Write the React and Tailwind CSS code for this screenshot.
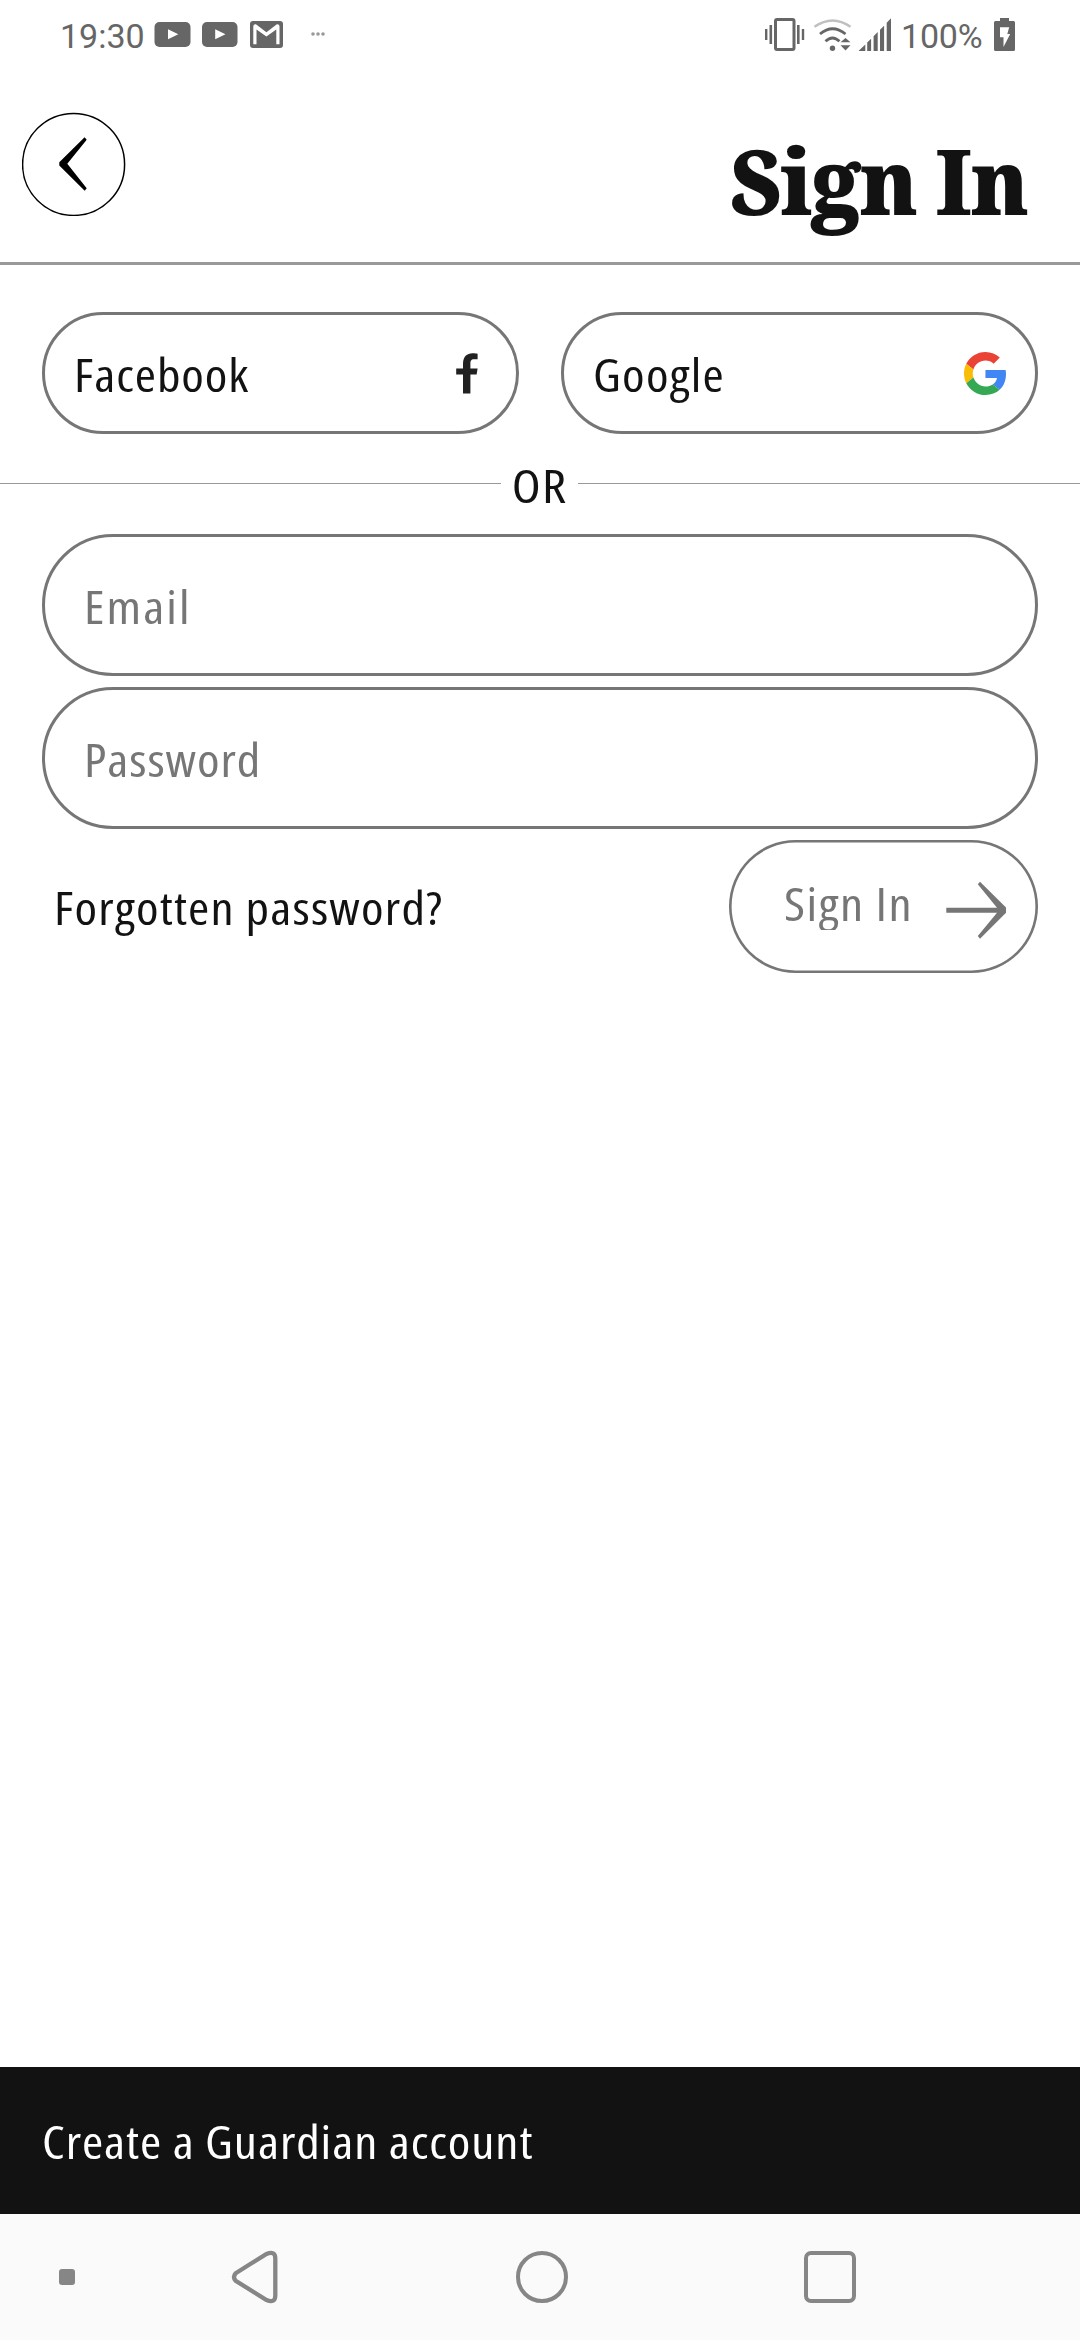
import React from "react";

function StatusBar() {
  return (
    <div className="flex h-[68px] w-full items-start justify-between pt-[14px]">
      <div className="flex h-[40px] items-center pl-[60px]">
        <span className="w-[94px] pt-[4px] font-[Roboto,sans-serif] text-[34px] leading-[40px] text-[#666]">19:30</span>
        <svg className="h-[40px] w-[180px]" viewBox="154 14 180 40" fill="#666">
          <rect x="154.5" y="22" width="36" height="25" rx="5" />
          <rect x="202" y="22" width="35.5" height="25" rx="5" />
          <path d="M168 29.3v10l10.3-5zM215.2 29.3v10l10.3-5z" fill="#fff" />
          <rect x="250" y="21" width="33" height="27" rx="3" />
          <path d="M253.3 44.3V26.2q0-2.2 2.6-2l10.5 8 10.5-8q2.6-.2 2.6 2v18.1h-3.2V29.6l-9.9 6.9-9.9-6.9v14.7z" fill="#fff" />
          <g fill="#999">
            <circle cx="313" cy="34" r="1.8" />
            <circle cx="318" cy="34" r="1.8" />
            <circle cx="323" cy="34" r="1.8" />
          </g>
        </svg>
      </div>
      <div className="flex h-[40px] items-center pr-[60px]">
        <svg className="h-[40px] w-[140px]" viewBox="760 14 140 40" fill="#666">
          <rect x="775.5" y="19.5" width="18.5" height="30" rx="1.5" fill="none" stroke="#666" strokeWidth="3" />
          <path d="M765 29h2.4v11H765zM769.5 25h2.6v19h-2.6zM797 25h2.6v19H797zM801.8 29h2.4v11h-2.4z" />
          <path d="M814.5 26.8q18-12.6 36 0" fill="none" stroke="#c0c0c0" strokeWidth="2.6" />
          <path d="M820 34q12.5-10.5 25.5 0M825.5 41.3q7-6.8 14 0" fill="none" stroke="#666" strokeWidth="2.8" />
          <circle cx="832.5" cy="48.2" r="2.7" />
          <path d="M840.5 42.3l5-4.3 5 4.3zM840.5 45.3h10l-5 5.2z" />
          <path d="M858.5 51l6.8-6.6V51zM867.2 51v-8.4l3.9-3.9V51zM873.6 51V36.2l4.1-4.1V51zM880 51V29.8l4.1-4.1V51zM886.7 51V22.8l4.3-4.6V51z" />
        </svg>
        <span className="w-[86px] pt-[4px] pl-px font-[Roboto,sans-serif] text-[34px] leading-[40px] tracking-[-0.2px] text-[#666]">100%</span>
        <svg className="h-[40px] w-[34px]" viewBox="986 14 34 40">
          <path d="M1000 18h9v3h4.5q1.5 0 1.5 1.5v27q0 1.5-1.5 1.5h-18q-1.5 0-1.5-1.5v-27q0-1.5 1.5-1.5h4.5z" fill="#666" />
          <path d="M1000 27.3h9.2L1007.3 34h2.9l-6.7 13V37.2h-3.5z" fill="#fff" />
        </svg>
      </div>
    </div>
  );
}

function Header() {
  return (
    <header className="flex h-[197px] items-start justify-between border-b-[3px] border-[#999] pr-[52px] pl-[22px]">
      <button className="mt-[44px] size-[104px] rounded-full" aria-label="Back">
        <svg className="size-[104px]" viewBox="22 112 104 104">
          <circle cx="73.6" cy="164.4" r="51" fill="none" stroke="#000" strokeWidth="1.5" />
          <path d="M59.3 162.3L84.6 137.2l2.1 2.6-19.4 24 19.4 24.4-2 2.6-25.4-25.2z" />
        </svg>
      </button>
      <h1 className="origin-right scale-x-94 pt-[50px] font-['Noto_Serif',serif] text-[91px] leading-[124px] font-black tracking-[-1.2px] text-[#121212] [word-spacing:-3px]">Sign In</h1>
    </header>
  );
}

function FacebookIcon() {
  return (
    <svg className="mr-[9px] h-[41px] w-[22px]" viewBox="455 355.5 22 41" fill="#212121">
      <path d="M462 396v-19h-6.8v-6H462v-4.5c0-7.5 4-10.8 9.5-10.8 2.5 0 4 .2 5.1.5v5.6H473c-3 0-3.6 1.7-3.6 4.2v5h7.2l-1 6h-6.2v19z" />
    </svg>
  );
}

function GoogleIcon() {
  return (
    <svg className="h-[43px] w-[42px]" viewBox="0 0 47 48" preserveAspectRatio="none">
      <path fill="#EA4335" d="M24 9.5c3.54 0 6.71 1.22 9.21 3.6l6.85-6.85C35.9 2.38 30.47 0 24 0 14.62 0 6.51 5.38 2.56 13.22l7.98 6.19C12.43 13.72 17.74 9.5 24 9.5z" />
      <path fill="#4285F4" d="M46.98 24.55c0-1.57-.15-3.09-.38-4.55H24v9.02h12.94c-.58 2.96-2.26 5.48-4.78 7.18l7.73 6c4.51-4.18 7.09-10.36 7.09-17.65z" />
      <path fill="#FBBC05" d="M10.53 28.59c-.48-1.45-.76-2.99-.76-4.59s.27-3.14.76-4.59l-7.98-6.19C.92 16.46 0 20.12 0 24c0 3.88.92 7.54 2.56 10.78l7.97-6.19z" />
      <path fill="#34A853" d="M24 48c6.48 0 11.93-2.13 15.89-5.81l-7.73-6c-2.15 1.45-4.92 2.3-8.16 2.3-6.26 0-11.57-4.22-13.47-9.91l-7.98 6.19C6.51 42.62 14.62 48 24 48z" />
    </svg>
  );
}

// Condensed sans text, slightly widened; tracking comes from the caller.
function Label({ className = "", children }) {
  return <span className={`inline-block scale-x-114 whitespace-nowrap [font-stretch:75%] ${className}`}>{children}</span>;
}

function SocialButton({ children, icon }) {
  return (
    <button className="flex h-[122px] flex-1 items-center justify-between rounded-full border-[3px] border-[#767676] pr-[29px] pl-[29px] text-[#121212]">
      {children}
      {icon}
    </button>
  );
}

function Field({ children }) {
  return (
    <div className="flex h-[142px] items-center rounded-full border-[3px] border-[#767676] pt-[4px] pl-[39px] text-[#767676]">
      {children}
    </div>
  );
}

export default function App() {
  return (
    <main className="flex h-[2340px] w-[1080px] flex-col bg-white font-['Open_Sans',sans-serif] text-[45px] leading-[60px]">
      <StatusBar />
      <Header />
      <section className="flex gap-[42px] px-[42px] pt-[47px]">
        <SocialButton icon={<FacebookIcon />}>
          <Label className="origin-left pt-[4px] tracking-[0.8px]">Facebook</Label>
        </SocialButton>
        <SocialButton icon={<GoogleIcon />}>
          <Label className="origin-left pt-[4px] tracking-[1.1px]">Google</Label>
        </SocialButton>
      </section>
      <div className="mb-px flex h-[99px] items-center text-[#121212]">
        <div className="h-px w-[501px] bg-[#999]" />
        <div className="flex-1 pt-[4px] text-center">
          <span className="inline-block scale-x-118 tracking-[1px] [font-stretch:75%]">OR</span>
        </div>
        <div className="h-px w-[502px] bg-[#999]" />
      </div>
      <section className="flex flex-col gap-[11px] px-[42px]">
        <Field>
          <Label className="origin-left tracking-[1.8px]">Email</Label>
        </Field>
        <Field>
          <Label className="origin-left tracking-[0.8px]">Password</Label>
        </Field>
        <div className="flex h-[133px] items-center justify-between pl-[12px]">
          <a className="pt-[3px] text-[#121212]">
            <Label className="origin-left tracking-[1.05px]">Forgotten password?</Label>
          </a>
          <button className="flex h-[133px] w-[309px] items-center justify-between rounded-full pr-[31px] pl-[55px] text-[#767676] shadow-[inset_0_0_0_2.6px_#767676]">
            <Label className="origin-left pb-[5px] tracking-[1.3px] [clip-path:inset(0_-9px_9px_0)]">Sign In</Label>
            <svg className="mt-[7px] h-[60px] w-[62px]" viewBox="945 880 62 60" fill="#767676">
              <path d="M946.3 907.7H997L977.8 884.3l2.2-2.6L1006 907.5v5.2L980 938.7l-2.2-2.6L997 912.7H946.3z" />
            </svg>
          </button>
        </div>
      </section>
      <footer className="mt-auto">
        <div className="flex h-[147px] items-center bg-[#121212] pt-[3px] pl-[42px] text-white">
          <Label className="origin-left tracking-[0.82px]">Create a Guardian account</Label>
        </div>
        <nav className="flex h-[126px] items-center bg-[#fafafa] pl-[59px]">
          <div className="size-[16px] rounded-[3px] bg-[#868686]" />
          <svg className="ml-[156px] h-[54px] w-[48px]" viewBox="231 2250 48 54" fill="none" stroke="#868686" strokeWidth="4.3">
            <path d="M235.7 2273.2L249.5 2264.5 266.5 2254Q275.3 2250.500 275.3 2258.5V2295.5Q275.3 2303.5 266.5 2300L235.7 2280.8Q232.3 2277 235.7 2273.2z" />
          </svg>
          <div className="ml-[237px] size-[52px] rounded-full border-[4px] border-[#868686]" />
          <div className="ml-[236px] size-[52px] rounded-[7px] border-[4px] border-[#868686]" />
        </nav>
      </footer>
    </main>
  );
}
